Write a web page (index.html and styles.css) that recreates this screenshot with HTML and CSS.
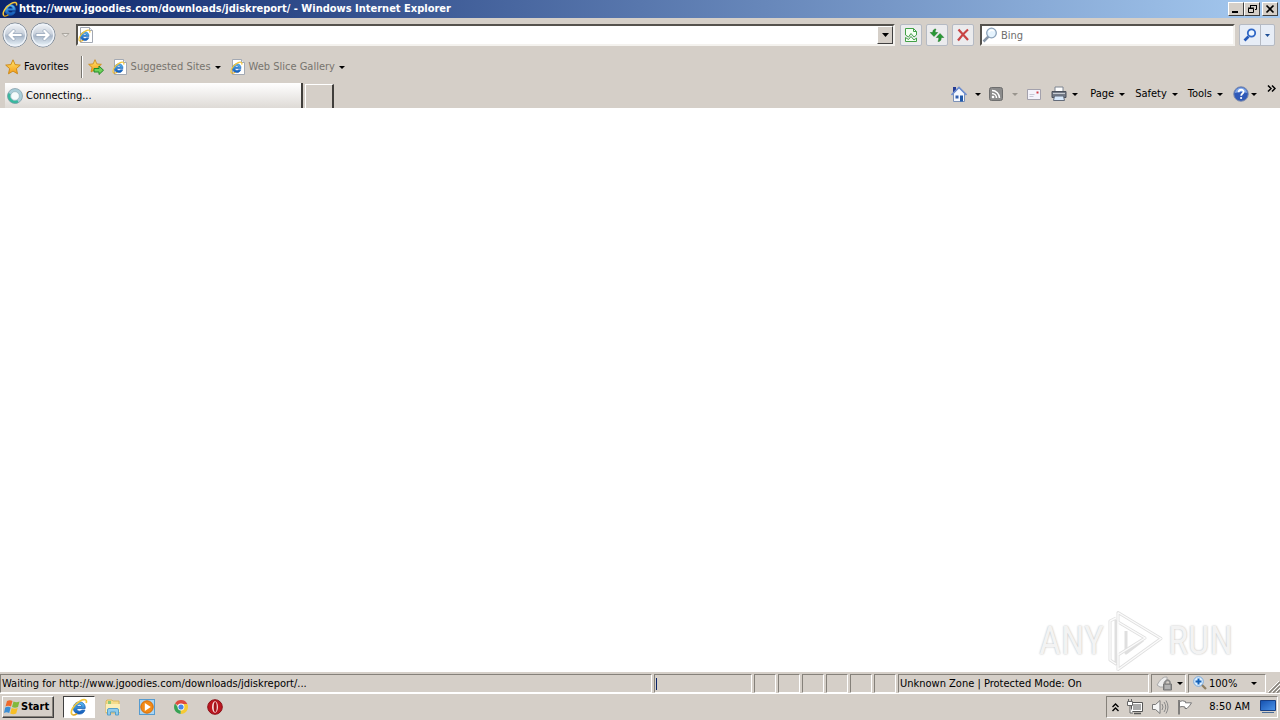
FILE: index.html
```html
<!DOCTYPE html>
<html lang="en">
<head>
<meta charset="utf-8">
<title>Windows Internet Explorer</title>
<link rel="stylesheet" href="styles.css">
</head>
<body>
<svg class="defs" aria-hidden="true">
  <defs>
    <linearGradient id="orb" x1="0" y1="0" x2="0" y2="1"><stop offset="0" stop-color="#f4f6f9"/><stop offset=".45" stop-color="#c9d1dc"/><stop offset=".55" stop-color="#a9b7c9"/><stop offset="1" stop-color="#f2fbff"/></linearGradient>
    <linearGradient id="blue" x1="0" y1="0" x2="0" y2="1"><stop offset="0" stop-color="#62c4f5"/><stop offset="1" stop-color="#0b52b4"/></linearGradient>
    <linearGradient id="gold" x1="0" y1="0" x2="0" y2="1"><stop offset="0" stop-color="#ffe873"/><stop offset="1" stop-color="#f59a13"/></linearGradient>
    <linearGradient id="screen" x1="0" y1="0" x2="1" y2="1"><stop offset="0" stop-color="#1450ae"/><stop offset="1" stop-color="#4d95ea"/></linearGradient>
    <symbol id="ie" viewBox="0 0 16 16">
      <path d="M13.500 9.300H6c.1 1.500 1.200 2.400 2.500 2.400.9 0 1.700-.4 2.100-1h2.700c-.8 2.300-2.500 3.600-4.900 3.600-3.200 0-5.400-2.100-5.400-5.300S5.200 3.500 8.400 3.500c3.300 0 5.300 2.300 5.100 5.800zM6.100 7.400h4.300C10.200 6.200 9.400 5.500 8.300 5.500s-2 .7-2.200 1.900z" fill="url(#blue)" stroke="#1b62b8" stroke-width=".7"/>
      <path d="M2 14.700C-.5 12.500 3.500 5.500 9 2.600c3.500-1.900 6.500-1.500 5.400 1.800" fill="none" stroke="#f3c63b" stroke-width="1.500"/>
      <path d="M2 14.700c1 .8 2.900.1 4.400-.9" fill="none" stroke="#dca21c" stroke-width="1.300"/>
    </symbol>
    <symbol id="iepage" viewBox="0 0 16 16">
      <path d="M2.500.5h9l3 3v12h-12z" fill="#fff" stroke="#a3a9b3"/>
      <path d="M11.500.5v3h3" fill="#e8edf4" stroke="#a3a9b3"/>
      <use href="#ie" x="0" y="2" width="13" height="13"/>
    </symbol>
    <symbol id="star" viewBox="0 0 16 16"><path d="M8 .8l2.100 4.800 5.200.5-3.900 3.500 1.100 5.200L8 12.100l-4.500 2.700 1.100-5.200L.7 6.100l5.200-.5z" fill="url(#gold)" stroke="#c98410" stroke-width=".9"/></symbol>
    <symbol id="arrow" viewBox="0 0 26 26">
      <circle cx="13" cy="13" r="12" fill="url(#orb)" stroke="#7c8795"/>
      <circle cx="13" cy="13" r="10.800" fill="none" stroke="#eef3f9" stroke-width="1.400"/>
      <path d="M5.500 13l6-6 2 2-2.500 2.500h9v3h-9l2.500 2.500-2 2z" fill="#fff" stroke="#8d9db3" stroke-width=".7"/>
    </symbol>
  </defs>
</svg>

<header class="titlebar">
  <svg class="i16"><use href="#ie"/></svg>
  <h1 class="title">http://www.jgoodies.com/downloads/jdiskreport/ - Windows Internet Explorer</h1>
  <button class="winbtn" aria-label="Minimize"><svg width="12" height="10"><path d="M2 8h6" stroke="#000" stroke-width="2"/></svg></button>
  <button class="winbtn" aria-label="Restore"><svg width="12" height="10"><path d="M4.500 4V1.500h6v4H9M4 1.500h7" fill="none" stroke="#000"/><path d="M2.500 4.500h5v4h-5zM2 4h6" fill="none" stroke="#000"/></svg></button>
  <button class="winbtn close" aria-label="Close"><svg width="12" height="10"><path d="M2.500 1.500l7 7m0-7l-7 7" stroke="#000" stroke-width="1.700"/></svg></button>
</header>

<nav class="navrow">
  <button class="orb" aria-label="Back"><svg width="26" height="26"><use href="#arrow"/></svg></button>
  <button class="orb" aria-label="Forward"><svg width="26" height="26"><use href="#arrow" transform="matrix(-1 0 0 1 26 0)"/></svg></button>
  <button class="history" aria-label="Recent pages"><svg width="9" height="5"><path d="M1 .5h7L4.500 4z" fill="#e9e6e1" stroke="#aaa69f"/></svg></button>
  <div class="address">
    <svg class="i16"><use href="#iepage"/></svg>
    <input class="field" type="text" aria-label="Address">
    <button class="dropbtn" aria-label="Show addresses"><svg width="7" height="4"><path d="M0 0h7L3.500 4z"/></svg></button>
  </div>
  <button class="tool" aria-label="Compatibility View"><svg width="14" height="16" viewBox="0 0 14 16"><path d="M1.500 8V1.500h8l3 3V8L10 10 7 6.500 4.500 10z" fill="#f4fff2" stroke="#43a047"/><path d="M1.500 10.500l3 2 2.500-3 3 3.500 2.500-2v3.500h-11z" fill="#f4fff2" stroke="#43a047"/><path d="M9.500 1.500v3h3" fill="none" stroke="#43a047"/></svg></button>
  <button class="tool" aria-label="Refresh"><svg width="16" height="16" viewBox="0 0 16 16"><path d="M7 2C4.500 2 3.800 3.500 3.800 5.500H1.200L5 9.500l3.700-4H6.200c0-1.700.1-2 .8-3.500z" fill="#289a34" stroke="#17711f" stroke-width=".5"/><path d="M9 14.500c2.500 0 3.200-1.500 3.200-4h2.600L11 6.500l-3.700 4h2.500c0 1.700-.1 2.500-.8 4z" fill="#289a34" stroke="#17711f" stroke-width=".5"/></svg></button>
  <button class="tool" aria-label="Stop"><svg width="14" height="14" viewBox="0 0 14 14"><path d="M2.500 1.500C5 4.500 9 8.500 12 12M12 1.500C8.500 4.500 5 8.500 2 12.500" stroke="#c84444" stroke-width="2.200" fill="none"/></svg></button>
  <div class="search">
    <svg class="i16" viewBox="0 0 16 16"><path d="M6.500 9.500L1.500 14.500" stroke="#8997a8" stroke-width="2.500"/><circle cx="9.500" cy="6" r="4.800" fill="#e5f3fd" stroke="#8ba2ba" stroke-width="1.300"/><path d="M7 5q2-3 5-1" fill="none" stroke="#fff" stroke-width="1.500"/></svg>
    <input class="field" type="text" placeholder="Bing" aria-label="Search">
  </div>
  <div class="searchgo">
    <button class="go" aria-label="Search"><svg width="14" height="14" viewBox="0 0 14 14"><path d="M5.500 8.500l-4 4" stroke="#2458b8" stroke-width="2.600"/><circle cx="8.500" cy="5" r="3.700" fill="#edf6ff" stroke="#2f67c6" stroke-width="1.800"/></svg></button>
    <button class="gomore" aria-label="Search options"><svg width="5" height="3"><path d="M0 0h5L2.500 3z" fill="#1f4f96"/></svg></button>
  </div>
</nav>

<div class="favrow">
  <button class="flat"><svg class="i16"><use href="#star"/></svg>Favorites</button>
  <span class="divider"></span>
  <button class="flat addfav" aria-label="Add to Favorites Bar"><svg class="i16" viewBox="0 0 16 16"><use href="#star" width="14" height="14"/><path d="M6 9.500h5V7l4.500 4.200L11 15.500V13H6z" fill="#6ed25a" stroke="#208a25"/></svg></button>
  <button class="flat muted"><svg class="i16"><use href="#iepage"/></svg>Suggested Sites<i class="caret"></i></button>
  <button class="flat muted"><svg class="i16"><use href="#iepage"/></svg>Web Slice Gallery<i class="caret"></i></button>
</div>

<div class="tabrow">
  <button class="tab"><svg class="i16" viewBox="0 0 16 16"><circle cx="8" cy="8" r="5.900" fill="#f5fbfc" stroke="#a9cdd8" stroke-width="3.200"/><path d="M2.500 5.500A6 6 0 0 0 11 13.200" fill="none" stroke="#37b99e" stroke-width="2.800"/><circle cx="8" cy="8" r="7.500" fill="none" stroke="#7f9aa5" stroke-width=".7"/><circle cx="8" cy="8" r="4.300" fill="none" stroke="#8fadb5" stroke-width=".6"/></svg>Connecting...</button>
  <button class="newtab" aria-label="New Tab"></button>
  <div class="commands">
    <button class="cmd home" aria-label="Home"><svg class="i16" viewBox="0 0 16 16"><path d="M2.500 7.500v8h11v-8L8 2z" fill="#f4f8ff" stroke="#7d92b8"/><path d="M2 1h3v5H2z" fill="#243b94"/><path d="M.5 9L8 1.500 15.500 9" fill="none" stroke="#6f8fd0" stroke-width="1.700"/><path d="M9 9.500h3v6H9z" fill="#2159aa"/><path d="M4.500 9.500h3v3h-3z" fill="#315fae"/></svg><i class="caret"></i></button>
    <button class="cmd feeds" aria-label="Feeds"><svg width="14" height="14" viewBox="0 0 14 14"><rect x=".5" y=".5" width="13" height="13" rx="2" fill="#8b8b8b" stroke="#6e6e6e"/><circle cx="4" cy="10" r="1.300" fill="#fff"/><path d="M3 6.500A4.500 4.500 0 0 1 7.500 11M3 3.500A7.500 7.500 0 0 1 10.500 11" fill="none" stroke="#fff" stroke-width="1.500"/></svg><i class="caret off"></i></button>
    <button class="cmd" aria-label="Read mail"><svg width="14" height="11" viewBox="0 0 14 11"><path d="M.5.500h13v10H.5z" fill="#f4f3fb" stroke="#a3a1ac"/><path d="M9.500 2.500h2v2h-2z" fill="#d33b44"/><path d="M2.500 5.500h5m-5 2h4" stroke="#c8c8d5"/></svg></button>
    <button class="cmd print" aria-label="Print"><svg class="i16" viewBox="0 0 16 16"><path d="M4 6V1h8v5" fill="#fff" stroke="#7c8490"/><path d="M1 5.500h14v6H1z" fill="#747b87" stroke="#4b515b"/><path d="M2 7.500h12" stroke="#c8ccd2"/><path d="M3.500 10h9l1 4.500h-11z" fill="#d7e8fa" stroke="#646c7a"/></svg><i class="caret"></i></button>
    <button class="cmd">Page<i class="caret"></i></button>
    <button class="cmd">Safety<i class="caret"></i></button>
    <button class="cmd">Tools<i class="caret"></i></button>
    <button class="cmd help" aria-label="Help"><svg class="i16" viewBox="0 0 16 16"><circle cx="8" cy="8" r="7.300" fill="#2f59b8" stroke="#8490ad"/><path d="M2 7a6 5.500 0 0 1 12 0q-6-2-12 0z" fill="#7fa6e8"/><path d="M5.600 6.200c0-3.200 5-3.200 5-.4 0 1.700-2.400 1.800-2.400 3.900" fill="none" stroke="#fff" stroke-width="1.800"/><circle cx="8.100" cy="12" r="1.100" fill="#fff"/></svg><i class="caret"></i></button>
    <button class="more" aria-label="More commands"><svg width="9" height="7"><path d="M1 .5l3 3-3 3M5 .5l3 3-3 3" fill="none" stroke="#000" stroke-width="1.500"/></svg></button>
  </div>
</div>

<main class="page">
  <div class="mark">
    <span>ANY</span>
    <svg width="56" height="62" viewBox="0 0 56 62"><g fill="none" stroke="#dfdfdf" stroke-linejoin="round"><path d="M10 2.500l43 26L10 59.500V45l27-17L10 12z" stroke-width="3"/><path d="M8 8L2 11v39l6 4V10M18 21v22l17-13" stroke-width="3"/></g><g fill="none" stroke="#fbfbfb" stroke-width="1.400"><path d="M10 2.500l43 26L10 59.500V2.500M10 12l27 16-27 17M8 8L2 11v39l6 4"/></g></svg>
    <span>RUN</span>
  </div>
</main>

<footer class="status">
  <div class="cell message">Waiting for http://www.jgoodies.com/downloads/jdiskreport/...</div>
  <div class="cell progress"><i class="bar"></i></div>
  <div class="cell slot"></div><div class="cell slot"></div><div class="cell slot"></div><div class="cell slot"></div><div class="cell slot"></div><div class="cell slot"></div>
  <div class="cell zone">Unknown Zone | Protected Mode: On</div>
  <button class="cell lock" aria-label="Privacy"><svg class="i16" viewBox="0 0 16 16"><path d="M1 10q5-9 10-8v5H8v5H4z" fill="#eee" stroke="#aaa"/><path d="M9 9V7q2.500-4 5 0v2" fill="none" stroke="#888" stroke-width="1.500"/><path d="M7.500 9h8v6h-8z" fill="#999" stroke="#777"/><path d="M9 11h5m-5 2h5" stroke="#ccc"/></svg><i class="caret"></i></button>
  <button class="cell zoomcell"><svg width="14" height="14" viewBox="0 0 14 14"><path d="M8.500 8.500l4.500 4.500" stroke="#8e7e61" stroke-width="2.200"/><circle cx="5.500" cy="5.500" r="4.800" fill="#dcefff" stroke="#77a8dc"/><path d="M5.500 2.500v6m-3-3h6" stroke="#1260b8" stroke-width="2"/></svg>100%<i class="caret"></i></button>
  <svg class="grip" width="12" height="12"><path d="M1 12L12 1M5 12l7-7M9 12l3-3" stroke="#85817a" stroke-width="1.500"/><path d="M0 11L11 0M4 11l8-8M8 11l4-4" stroke="#fff"/></svg>
</footer>

<div class="taskbar">
  <button class="start"><svg width="17" height="16" viewBox="0 0 17 16"><path d="M3 2q3-1.500 5.500 0L7 7.500q-3-1.500-5.500 0z" fill="#ef6a2c"/><path d="M9.500 2.500q3 1.500 6 0L14 8q-3 1.300-6 0z" fill="#82b93d"/><path d="M1.200 8.500q3-1.500 5.500 0L5.200 14Q2.500 12.500 0 14z" fill="#3b8ed5"/><path d="M7.700 9q3 1.500 6 0l-1.500 5.500q-3 1.300-6 0z" fill="#f7bf25"/></svg>Start</button>
  <button class="task active" aria-label="Internet Explorer"><svg width="18" height="18"><use href="#ie"/></svg></button>
  <button class="task" aria-label="Explorer"><svg width="18" height="18" viewBox="0 0 18 18"><path d="M2 3l1-1h5l1 1h6v12H2z" fill="#f5dc8b" stroke="#dcb85f"/><path d="M4 3h3v3H4z" fill="#8cc878"/><path d="M2 6h14v8H2z" fill="#fbeeb8"/><path d="M3.500 17v-5q0-1.500 1.500-1.500h8q1.500 0 1.500 1.500v5h-3v-3h-5v3z" fill="#8fcbec" stroke="#559fcb"/></svg></button>
  <button class="task" aria-label="Media Player"><svg width="18" height="18" viewBox="0 0 18 18"><rect x="1.500" y="1.500" width="15" height="15" fill="#a9d5f4" stroke="#569bcf"/><circle cx="9" cy="9" r="6.200" fill="#f38a15" stroke="#d46b06"/><path d="M6.800 5l6 4-6 4z" fill="#fff"/></svg></button>
  <button class="task" aria-label="Chrome"><svg width="16" height="16" viewBox="0 0 16 16"><path d="M8 8L2 4.500A7 7 0 0 1 14.300 5H8z" fill="#dd4b3e"/><path d="M8 8V5h6.300A7 7 0 0 1 7.500 15z" fill="#f6ca34"/><path d="M8 8l-.5 7A7 7 0 0 1 2 4.500L5.500 9z" fill="#37a254"/><circle cx="8" cy="8" r="3.400" fill="#fff"/><circle cx="8" cy="8" r="2.600" fill="#4787e8"/></svg></button>
  <button class="task" aria-label="Opera"><svg width="16" height="16" viewBox="0 0 16 16"><circle cx="8" cy="8" r="7.300" fill="#bc1620" stroke="#8b1017"/><ellipse cx="8" cy="8" rx="3" ry="5.800" fill="#f7dada"/><ellipse cx="8.200" cy="8" rx="1.500" ry="5" fill="#a3121a"/></svg></button>
  <div class="tray">
    <svg width="7" height="9"><path d="M.5 4l3-3 3 3M.5 8l3-3 3 3" fill="none" stroke="#000" stroke-width="1.400"/></svg>
    <svg width="16" height="16" viewBox="0 0 16 16"><path d="M4.500 3.500h11v9h-11z" fill="#fff" stroke="#555"/><path d="M6 5h8v6H6z" fill="#aaa"/><path d="M7 14.500h7" stroke="#555" stroke-width="1.500"/><path d="M.5 2.500h5v4h-5zM1.500 0v2m3-2v2M3 7v7h3" fill="#fff" stroke="#666"/></svg>
    <svg width="18" height="16" viewBox="0 0 18 16"><path d="M1.500 5.500h3L9 1.500v13l-4.500-4h-3z" fill="#f5f5f5" stroke="#777"/><path d="M11 5q2 3 0 6M13 3q3.500 5 0 10M15 1.500q4 6.500 0 13" fill="none" stroke="#888"/></svg>
    <svg width="16" height="16" viewBox="0 0 16 16"><path d="M2 1v14.500" stroke="#666" stroke-width="1.500"/><path d="M2.500 2.500q3-1.500 6 0v1.300h6l-2 3L10 9.500H8V8Q5 7 2.500 8z" fill="#fff" stroke="#777"/></svg>
    <time class="clock">8:50 AM</time>
    <svg width="16" height="14" viewBox="0 0 16 14"><path d="M.5.500h15v10H.5z" fill="url(#screen)" stroke="#173f85"/><path d="M2 12.500h12" stroke="#496b97"/></svg>
  </div>
</div>
</body>
</html>
```

FILE: styles.css
```css
* { box-sizing: border-box; }
body {
  margin: 0;
  min-height: 100vh;
  display: flex;
  flex-direction: column;
  background: #d5cfc8;
  color: #000;
  font: 11px/14px "DejaVu Sans Condensed", "DejaVu Sans", sans-serif;
}
button, input { font: inherit; color: inherit; }
button {
  display: flex;
  align-items: center;
  border: 0;
  padding: 0;
  background: none;
  white-space: nowrap;
}
svg { display: block; flex: none; }
.defs { position: absolute; width: 0; height: 0; }
.i16 { width: 16px; height: 16px; }
.caret {
  flex: none;
  border: 3px solid transparent;
  border-top-color: #000;
  border-bottom: 0;
}
.caret.off { border-top-color: #99958e; }

.titlebar {
  display: flex;
  align-items: center;
  height: 18px;
  padding: 0 2px;
  color: #fff;
  background: linear-gradient(90deg, #0a246a, #a6caf0);
}
.title { flex: 1; margin: 0 0 0 1px; font-size: 11px; line-height: 14px; }
.winbtn {
  justify-content: center;
  width: 16px;
  height: 14px;
  background: #d5cfc8;
  border: 1px solid;
  border-color: #fff #404040 #404040 #fff;
}
.close { margin-left: 2px; }

.navrow { display: flex; align-items: center; height: 34px; padding: 0 5px 0 2px; }
.orb { margin-right: 2px; }
.history { margin: 0 6px 0 3px; }
.address, .search {
  display: flex;
  align-items: center;
  height: 22px;
  background: #fff;
  border: 2px solid;
  border-color: #55524d #f4f2ee #f4f2ee #55524d;
}
.address { flex: 1; margin-right: 5px; }
.field { flex: 1; min-width: 0; height: 16px; padding: 0 3px; border: 0; outline: 0; background: none; }
.field::placeholder { color: #6d6d6d; opacity: 1; }
.dropbtn {
  justify-content: center;
  width: 16px;
  height: 18px;
  background: #d5cfc8;
  border: 1px solid;
  border-color: #fff #404040 #404040 #fff;
}
.tool {
  justify-content: center;
  width: 22px;
  height: 22px;
  margin-right: 4px;
  background: #ebebed;
  border: 1px solid #b5bac3;
  border-radius: 2px;
}
.search { width: 255px; margin: 0 4px 0 2px; }
.searchgo { display: flex; height: 22px; border: 1px solid #b5bac3; border-radius: 2px; background: #e7edf6; }
.go { justify-content: center; width: 20px; }
.gomore { justify-content: center; width: 14px; border-left: 1px solid #b5bac3; }

.favrow { display: flex; align-items: center; height: 30px; padding: 0 5px; }
.flat { gap: 3px; }
.divider { width: 2px; height: 22px; margin: 0 5px 0 12px; border-left: 1px solid #77746e; border-right: 1px solid #fff; }
.addfav { margin-right: 8px; }
.muted { margin-right: 9px; color: #77746e; }
.muted .caret { margin-left: 1px; }

.tabrow { display: flex; align-items: flex-end; height: 26px; padding-left: 5px; }
.tab {
  gap: 3px;
  width: 298px;
  height: 25px;
  padding-left: 2px;
  background: linear-gradient(#fff, #dedad6);
  border-right: 2px solid #403e3b;
}
.newtab { width: 29px; height: 24px; margin-left: 2px; border: solid; border-width: 1px 2px 0 1px; border-color: #fff #403e3b #fff #fff; }
.commands { display: flex; align-items: center; height: 26px; margin-left: auto; padding: 0 4px 2px 0; }
.cmd { gap: 5px; margin-right: 10px; }
.home { gap: 8px; margin-right: 8px; }
.feeds { gap: 9px; margin-right: 9px; }
.print { margin-right: 12px; }
.help { gap: 2px; }
.more { align-self: flex-start; padding-top: 3px; }

.page { flex: 1; display: flex; justify-content: flex-end; align-items: flex-end; padding-right: 47px; background: #fff; }
.mark {
  display: flex;
  align-items: center;
  gap: 4px;
  color: #f3f3f3;
  font: 38px/60px "Roboto Condensed", Roboto, sans-serif;
  text-shadow: 0 0 2px #b4b4b4;
}

.status { display: flex; align-items: center; gap: 2px; height: 22px; padding-top: 1px; border-bottom: 1px solid #fff; }
.cell {
  height: 19px;
  padding: 0 1px;
  border: 1px solid;
  border-color: #85817a #fff #fff #85817a;
  line-height: 17px;
  white-space: nowrap;
}
.message { flex: 1; }
.progress { width: 98px; padding: 3px 1px; }
.bar { display: block; width: 1px; height: 12px; background: #0a246a; }
.slot { width: 22px; }
.zone { width: 251px; }
.lock { width: 35px; gap: 5px; padding-left: 4px; }
.zoomcell { width: 78px; gap: 2px; padding: 0 8px 0 4px; }
.zoomcell .caret { margin-left: auto; }
.grip { align-self: flex-end; }

.taskbar { display: flex; align-items: center; height: 26px; padding: 0 2px; }
.start {
  gap: 0;
  width: 52px;
  height: 22px;
  margin-right: 9px;
  padding: 0 1px;
  font-weight: bold;
  border: 1px solid;
  border-color: #fff #404040 #404040 #fff;
  box-shadow: inset -1px -1px #85817a;
}
.task { justify-content: center; width: 32px; height: 22px; margin-right: 2px; }
.active { background: #fff; border: 1px solid; border-color: #404040 #fff #fff #404040; }
.tray {
  display: flex;
  align-items: center;
  gap: 8px;
  height: 22px;
  margin-left: auto;
  padding: 0 1px 0 5px;
  border: 1px solid;
  border-color: #85817a #fff #fff #85817a;
}
.clock { margin: 0 2px 0 8px; }
```
